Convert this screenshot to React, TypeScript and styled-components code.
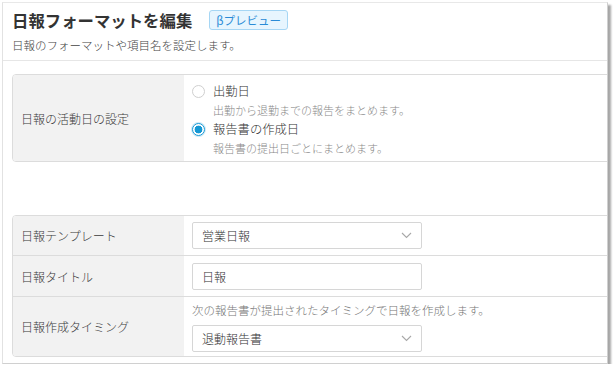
import React from "react";
import styled, { createGlobalStyle } from "styled-components";

const GlobalStyle = createGlobalStyle`
  body {
    margin: 0;
    background: #ffffff;
    font-family: "Noto Sans CJK JP", "Noto Sans", sans-serif;
    font-weight: 300;
    color: #3a3a3a;
  }
`;

const Card = styled.div`
  margin: 2px 0 0 2px;
  width: 604px;
  height: 360px;
  border-left: 1px solid #e2e2e2;
  border-top: 1px solid #e8e8e8;
  border-right: 1px solid #d0d0d0;
  border-bottom: 1px solid #d0d0d0;
  box-shadow: 3px 3px 2px rgba(0, 0, 0, 0.35);
  background: #fff;
  overflow: hidden;
`;

const Header = styled.div`
  padding: 6px 0 0 9px;
  height: 51px;
  border-bottom: 1px solid #e6e6e6;
`;

const TitleRow = styled.div`
  display: flex;
  align-items: center;
  gap: 17px;
  height: 22px;
`;

const Title = styled.h1`
  margin: 0;
  font-size: 16.4px;
  font-weight: 700;
  line-height: 22px;
  color: #333;
`;

const Badge = styled.span`
  display: inline-flex;
  align-items: center;
  height: 18px;
  padding: 0 6px;
  background: #e7f5fe;
  border: 1px solid #a6d6f4;
  border-radius: 3px;
  color: #2a8bd6;
  font-size: 11.5px;
  font-weight: 400;
`;

const Subtitle = styled.p`
  margin: 6px 0 0;
  font-size: 11.5px;
  line-height: 16px;
  color: #444;
`;

const Body = styled.div`
  padding: 13px 0 0 9px;
  display: flex;
  flex-direction: column;
  gap: 53px;
`;

const Table = styled.div`
  width: 620px;
  border: 1px solid #dcdcdc;
  border-radius: 4px;
  overflow: hidden;
`;

const Row = styled.div<{ $h: number }>`
  display: flex;
  min-height: ${(p) => p.$h}px;
  & + & {
    border-top: 1px solid #dcdcdc;
  }
`;

const Label = styled.div`
  width: 163px;
  flex-shrink: 0;
  padding-left: 8px;
  background: #f2f2f2;
  display: flex;
  align-items: center;
  font-size: 12px;
  color: #3a3a3a;
`;

const Cell = styled.div<{ $pt: number }>`
  flex: 1;
  padding: ${(p) => p.$pt}px 0 0 8px;
  display: flex;
  flex-direction: column;
`;

const RadioLine = styled.label`
  display: flex;
  align-items: center;
  gap: 8px;
  height: 20px;
  font-size: 12.3px;
  color: #333;
`;

const RadioMark = styled.span<{ $on?: boolean }>`
  width: 13px;
  height: 13px;
  border-radius: 50%;
  box-sizing: border-box;
  border: 1px solid ${(p) => (p.$on ? "#1598d4" : "#cfcfcf")};
  background: ${(p) =>
    p.$on ? "radial-gradient(circle, #1598d4 0 3.6px, #fff 4.2px)" : "#fff"};
  box-shadow: ${(p) => (p.$on ? "0 0 0 1px #cde9f7" : "none")};
`;

const Desc = styled.div`
  padding-left: 21px;
  height: 18px;
  line-height: 18px;
  font-size: 11px;
  color: #8a8a8a;
`;

const Help = styled.div`
  font-size: 11.5px;
  line-height: 18px;
  color: #777;
  margin-bottom: 6px;
`;

const Field = styled.div`
  width: 230px;
  height: 27px;
  box-sizing: border-box;
  border: 1px solid #d6d6d6;
  border-radius: 2px;
  display: flex;
  align-items: center;
  justify-content: space-between;
  padding: 0 9px 0 9px;
  font-size: 12px;
  color: #333;
`;

const Chevron = () => (
  <svg width="11" height="7" viewBox="0 0 11 7">
    <path d="M1 1l4.5 4.5L10 1" fill="none" stroke="#a8a8a8" strokeWidth="1.1" />
  </svg>
);

export default function App() {
  return (
    <>
      <GlobalStyle />
      <Card>
        <Header>
          <TitleRow>
            <Title>日報フォーマットを編集</Title>
            <Badge>βプレビュー</Badge>
          </TitleRow>
          <Subtitle>日報のフォーマットや項目名を設定します。</Subtitle>
        </Header>
        <Body>
          <Table>
            <Row $h={86}>
              <Label>日報の活動日の設定</Label>
              <Cell $pt={6}>
                <RadioLine>
                  <RadioMark />
                  出勤日
                </RadioLine>
                <Desc>出勤から退勤までの報告をまとめます。</Desc>
                <RadioLine>
                  <RadioMark $on />
                  報告書の作成日
                </RadioLine>
                <Desc>報告書の提出日ごとにまとめます。</Desc>
              </Cell>
            </Row>
          </Table>
          <Table>
            <Row $h={39}>
              <Label>日報テンプレート</Label>
              <Cell $pt={6}>
                <Field>
                  営業日報
                  <Chevron />
                </Field>
              </Cell>
            </Row>
            <Row $h={40}>
              <Label>日報タイトル</Label>
              <Cell $pt={7}>
                <Field>日報</Field>
              </Cell>
            </Row>
            <Row $h={59}>
              <Label>日報作成タイミング</Label>
              <Cell $pt={4}>
                <Help>次の報告書が提出されたタイミングで日報を作成します。</Help>
                <Field>
                  退動報告書
                  <Chevron />
                </Field>
              </Cell>
            </Row>
          </Table>
        </Body>
      </Card>
    </>
  );
}
